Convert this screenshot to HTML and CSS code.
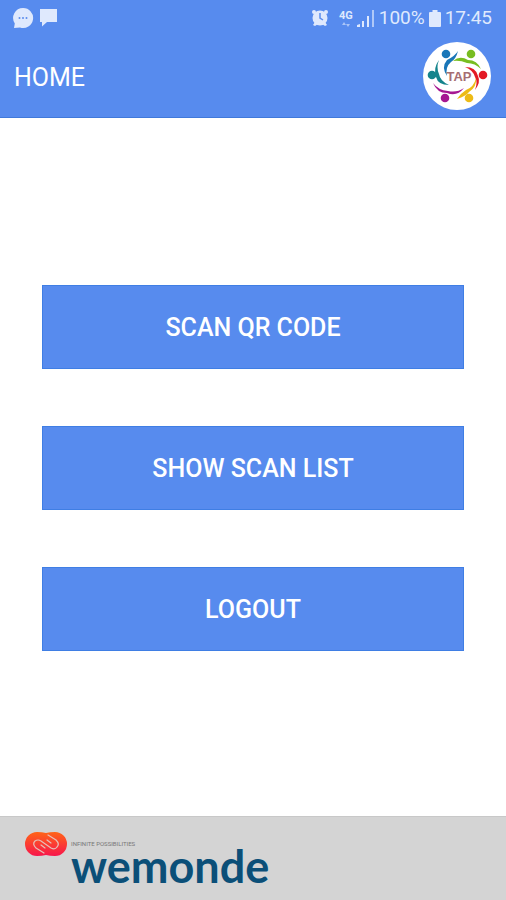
FILE: index.html
```html
<!DOCTYPE html>
<html lang="en">
<head>
<meta charset="utf-8">
<meta name="viewport" content="width=device-width, initial-scale=1">
<title>Home</title>
<link rel="stylesheet" href="styles.css">
</head>
<body>
<header class="top">
  <div class="status">
    <div class="status-group">
      <svg class="icon-chat" viewBox="0 0 22 22" aria-hidden="true">
        <path fill="#dfe9fd" d="M11 1a10 10 0 1 1-3 19.500L2 21l.8-4.500A10 10 0 0 1 11 1z"/>
        <g fill="#5b8dee"><circle cx="7.500" cy="11" r="1"/><circle cx="11" cy="11" r="1"/><circle cx="14.500" cy="11" r="1"/></g>
      </svg>
      <svg class="icon-message" viewBox="0 0 18 18" aria-hidden="true">
        <path fill="#dfe9fd" d="M0 0h17v13H7l-5 4.500V13H0z"/>
      </svg>
    </div>
    <div class="status-group status-right">
      <svg class="icon-alarm" viewBox="0 0 18 18" aria-hidden="true">
        <g fill="#dfe9fd"><circle cx="9" cy="9" r="7.500"/><circle cx="3" cy="3" r="2"/><circle cx="15" cy="3" r="2"/><path d="M2 16l2-3 3 2-3 2zM16 16l-2-3-3 2 3 2z"/></g>
        <path d="M9 4v5l3 2" fill="none" stroke="#5b8dee" stroke-width="1.500"/>
      </svg>
      <div class="network">
        <span>4G</span>
        <svg class="icon-data" viewBox="0 0 10 5" aria-hidden="true"><path fill="#a9c4f8" d="M3 0 5 3H1zM5 2h4L7 5z"/></svg>
      </div>
      <svg class="icon-signal" viewBox="0 0 18 18" aria-hidden="true">
        <g fill="#dfe9fd"><path d="M0 18v-2l3-1v3zM5 12h2v6H5zM10 7h2v11h-2z"/><path opacity=".65" d="M15 1h2v17h-2z"/></g>
      </svg>
      <span class="status-text">100%</span>
      <svg class="icon-battery" viewBox="0 0 12 17" aria-hidden="true"><path fill="#dfe9fd" d="M3.500 0h5v2H11q1 0 1 1v13q0 1-1 1H1q-1 0-1-1V3q0-1 1-1h2.500z"/></svg>
      <time class="status-text">17:45</time>
    </div>
  </div>
  <div class="bar">
    <h1>HOME</h1>
    <svg class="tap" viewBox="0 0 68 68" role="img" aria-label="TAP">
      <circle cx="34" cy="34" r="34" fill="#fff"/>
      <g fill="#1976b8"><circle cx="23" cy="12" r="4.300"/><path d="M35 9Q33 17 28 20 22 25 24 34 18 25 24 18 32 14 35 9z"/></g>
      <g fill="#78bd20"><circle cx="48" cy="12" r="4.300"/><path d="M30 19Q37 13 45 18 54 18 58 27 52 21 44 21 37 18 30 19z"/></g>
      <g fill="#e31925"><circle cx="60" cy="33" r="4.300"/><path d="M42 25Q53 25 55 34 58 40 52 48 55 40 52 35 50 28 42 25z"/></g>
      <g fill="#edbb16"><circle cx="46" cy="56" r="4.300"/><path d="M53 36Q54 45 46 50 43 54 34 57 38 51 43 48 51 45 53 36z"/></g>
      <g fill="#a51792"><circle cx="22" cy="56" r="4.300"/><path d="M10 41Q15 48 25 49 34 51 41 46 34 55 24 51 14 51 10 41z"/></g>
      <g fill="#14848c"><circle cx="9" cy="33" r="4.300"/><path d="M16 18Q13 25 16 32 17 39 26 43 15 43 13 35 10 26 16 18z"/></g>
      <text class="tap-text" x="36" y="39" text-anchor="middle">TAP</text>
    </svg>
  </div>
</header>
<main class="actions">
  <button type="button">SCAN QR CODE</button>
  <button type="button">SHOW SCAN LIST</button>
  <button type="button">LOGOUT</button>
</main>
<footer class="footer">
  <svg class="loops" viewBox="0 0 42 24" aria-hidden="true">
    <defs><linearGradient id="warm" x1="0" y1="0" x2="0" y2="1"><stop offset="0" stop-color="#ff6418"/><stop offset="1" stop-color="#f7164c"/></linearGradient></defs>
    <path fill="url(#warm)" d="M12 0Q17 0 21 1 25 0 30 0A12 12 0 0 1 30 24Q25 24 21 23 17 24 12 24A12 12 0 0 1 12 0z"/>
    <path d="M19 21 11 16Q7 12 10 9 13 7 16 9L26 16Q30 18 32 15 35 12 31 8L23 3M16 13 20 16M22 8 26 11" fill="none" stroke="#e6c0b8" stroke-width="1.200" stroke-linecap="round"/>
  </svg>
  <div class="brand">
    <span class="tagline">INFINITE POSSIBILITIES</span>
    <span class="wordmark">wemonde</span>
  </div>
</footer>
</body>
</html>
```
FILE: styles.css
```css
* { box-sizing: border-box; }

body {
  margin: 0;
  min-height: 100vh;
  display: flex;
  flex-direction: column;
  background: #fff;
  font-family: Roboto, "Liberation Sans", sans-serif;
}

.top {
  background: #578bee;
  border-bottom: 1px solid #4079da;
  color: #fff;
}

.status {
  height: 36px;
  padding: 0 14px 0 12px;
  display: flex;
  align-items: center;
  justify-content: space-between;
  color: #dfe9fd;
}

.status-group {
  display: flex;
  align-items: center;
  gap: 6px;
}

.status-right { gap: 4px; }
.status-text { font-size: 19px; line-height: 24px; }
.icon-chat { width: 22px; height: 22px; }
.icon-message { width: 18px; height: 18px; }
.icon-alarm { width: 18px; height: 18px; margin-right: 6px; }
.icon-signal { width: 18px; height: 18px; }
.icon-battery { width: 12px; height: 17px; }
.icon-data { width: 10px; height: 5px; }

.network {
  display: flex;
  flex-direction: column;
  align-items: center;
  font-size: 11px;
  line-height: 12px;
  font-weight: 700;
}

.bar {
  padding: 6px 15px 7px 14px;
  display: flex;
  align-items: center;
  justify-content: space-between;
}

h1 {
  margin: 0;
  padding-top: 4px;
  font-size: 25px;
  line-height: 30px;
  font-weight: 400;
}

.tap { width: 68px; height: 68px; }

.tap-text {
  font: 700 13px "Liberation Sans", sans-serif;
  fill: #a66e72;
}

.actions {
  flex: 1;
  padding: 1px 42px 0;
  display: flex;
  flex-direction: column;
  justify-content: center;
  gap: 57px;
}

.actions button {
  width: 100%;
  height: 84px;
  padding: 3px 0 0;
  border: 1px solid #3f7ee4;
  background: #578bee;
  color: #fff;
  font: 500 25px/30px Roboto, "Liberation Sans", sans-serif;
}

.footer {
  height: 84px;
  padding: 15px 25px 0;
  display: flex;
  align-items: flex-start;
  gap: 4px;
  background: #d4d4d4;
  border-top: 1px solid #c8c8c8;
}

.loops { width: 42px; height: 24px; }

.brand {
  display: flex;
  flex-direction: column;
  color: #0b4f78;
}

.tagline {
  padding-top: 8px;
  font-size: 6px;
  line-height: 8px;
  color: #777;
}

.wordmark {
  font: 700 45px/36px Lato, "Liberation Sans", sans-serif;
}
```
